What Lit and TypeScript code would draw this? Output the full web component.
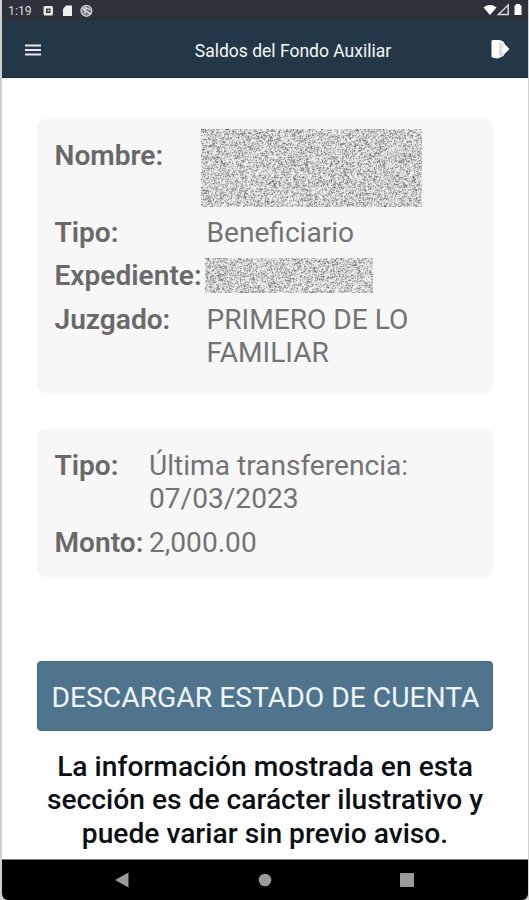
import { LitElement, html, css } from "lit";
import { customElement, property } from "lit/decorators.js";

/** A grainy block that hides private data. */
@customElement("redacted-block")
class RedactedBlock extends LitElement {
  @property({ type: Number }) seed = 3;
  @property({ type: Number }) w = 100;
  @property({ type: Number }) h = 30;
  static styles = css`
    :host { display: block; }
    canvas { display: block; }
  `;
  render() {
    return html`<canvas width=${this.w} height=${this.h}></canvas>`;
  }
  updated() {
    const ctx = this.renderRoot.querySelector("canvas")!.getContext("2d")!;
    const { w, h } = this;
    const image = ctx.createImageData(w, h);
    let state = this.seed * 7919 + 17;
    const random = () => {
      state = (state + 0x6d2b79f5) | 0;
      let t = Math.imul(state ^ (state >>> 15), 1 | state);
      t = (t + Math.imul(t ^ (t >>> 7), 61 | t)) ^ t;
      return ((t ^ (t >>> 14)) >>> 0) / 4294967296;
    };
    const grain = Array.from({ length: w * h }, () => 246 - 150 * Math.pow(random(), 2.3));
    for (let i = 0; i < w * h; i++) {
      const side = grain[i % w ? i - 1 : i];
      const up = grain[i >= w ? i - w : i];
      const v = grain[i] * 0.64 + side * 0.18 + up * 0.18;
      image.data.set([v, v, v, 255], i * 4);
    }
    ctx.putImageData(image, 0, 0);
  }
}

@customElement("app-root")
class AppRoot extends LitElement {
  static styles = css`
    :host {
      display: flex; box-sizing: border-box; width: 529px; height: 900px;
      padding: 0 1px 0 2px; background: #d0d0d0;
      font-family: Roboto, "Liberation Sans", sans-serif;
    }
    .phone {
      flex: 1; min-width: 0; display: flex; flex-direction: column;
      background: #fff; border-radius: 0 0 6px 6px; overflow: hidden;
    }
    svg { display: block; flex: none; }
    .status {
      height: 20px; flex: none; background: #2d313b; color: #d8dade; display: flex;
      align-items: center; padding: 2px 5px 0 6px; box-sizing: border-box;
    }
    .clock { font-size: 12.3px; line-height: 16px; width: 35px; }
    .spacer { flex: 1; }
    .bar {
      height: 58px; flex: none; box-sizing: border-box; background: #243746;
      border-bottom: 1px solid #152940; color: #f5f7f8;
      display: grid; grid-template-columns: 60px 1fr 40px; align-items: center;
      padding-top: 2px;
    }
    .title { font-size: 17.5px; line-height: 22px; text-align: center; white-space: nowrap; padding: 3px 0 0 36px; }
    .menu { margin: 0 0 0 22px; }
    .exit { margin-left: 2px; margin-top: -2px; }
    main { flex: 1; padding: 41px 35px 0 35px; color: #737373; font-size: 28.1px; line-height: 33.3px; }
    .card {
      background: #f7f7f7; border-radius: 7px; box-sizing: border-box;
      display: grid; row-gap: 10px; align-content: start; padding: 20.4px 17px 0 17.5px;
    }
    .person { height: 274px; grid-template-columns: 152px 1fr; }
    .transfer { height: 148px; margin-top: 36px; grid-template-columns: 94.5px 1fr; padding-top: 20px; }
    .label { font-weight: 600; color: #696969; white-space: nowrap; }
    .two { height: 66.6px; }
    .grain-name { width: 221px; height: 78px; margin: -10.4px 0 0 -5.5px; }
    .grain-file { width: 168px; height: 35px; margin: -1.3px 0 0 -1.5px; }
    .file { height: 33.3px; }
    .button {
      display: flex; align-items: center; justify-content: center; width: 100%; height: 70px;
      margin-top: 84px; padding: 3px 0 0 1px; box-sizing: border-box; border: 1px solid #406b84; border-radius: 4px;
      background: #50748c; color: #eef4fb; font: 28.25px/33px Roboto, sans-serif; white-space: nowrap;
    }
    .note { margin: 19px -10px 0; text-align: center; font-weight: 500; font-size: 28.2px; color: #0b1015; }
    .nav {
      height: 41px; flex: none; box-sizing: border-box; background: #000; border-top: 1px solid #777;
      display: flex; align-items: center;
    }
    .back { margin-left: 112px; }
    .home { margin-left: 128px; }
    .recent { margin-left: 128px; }
  `;

  render() {
    return html`<div class="phone">
      <div class="status">
        <span class="clock">1:19</span>
        <svg width="54" height="14" viewBox="0 0 54 14">
          <rect x="0.5" y="2" width="9.5" height="9.5" rx="1.5" fill="#e8e8e8" />
          <rect x="3" y="4.5" width="4.5" height="4.5" fill="#30343d" />
          <rect x="4.5" y="5.8" width="1.7" height="1.7" fill="#eee" />
          <path d="M23 1.5h6v10.5h-9V5z" fill="#efefef" />
          <circle cx="43.4" cy="6.8" r="5.4" fill="#777b82" stroke="#c9cbce" stroke-width="1.4" />
          <path d="M39.5 4.5l8.5 6M42 2.5v7.5M42 3.5l5 2" fill="none" stroke="#e5e5e5" stroke-width="1.2" />
        </svg>
        <span class="spacer"></span>
        <svg width="40" height="16" viewBox="0 0 40 16">
          <path d="M0.5 4.4Q7 -0.4 13.5 4.4L7 12z" fill="#fff" />
          <path d="M25.2 2v9.5H15.5z" fill="none" stroke="#d3d5d8" stroke-width="1.5" />
          <path d="M31.5 2.2h1.5V1h4v1.2h1.5V12h-7z" fill="#fff" />
        </svg>
      </div>
      <header class="bar">
        <svg class="menu" width="18" height="14" viewBox="0 0 18 14">
          <path d="M1 2.5h16M1 7h16M1 11.5h16" stroke="#e7e6ec" stroke-width="1.9" />
        </svg>
        <span class="title">Saldos del Fondo Auxiliar</span>
        <svg class="exit" width="20" height="22" viewBox="0 0 20 22">
          <path d="M1.5 3.2Q1.5 2.2 2.5 2h6.3q5 .4 6 4.2l4.7 4.8-4.7 4.7q-1 3-4.3 3.6L7.5 20.5 3 19.8q-1.5-.3-1.5-1.3z" fill="#fff" />
          <path d="M9 4.5l4 1 .5 3.5-1.5 1v3l1.5 1-.5 3.5-4 1.5z" fill="#dedede" />
        </svg>
      </header>
      <main>
        <section class="card person">
          <span class="label two">Nombre:</span>
          <div class="two"><redacted-block class="grain-name" .seed=${4} .w=${221} .h=${78}></redacted-block></div>
          <span class="label">Tipo:</span><span>Beneficiario</span>
          <span class="label">Expediente:</span>
          <div class="file"><redacted-block class="grain-file" .seed=${9} .w=${168} .h=${35}></redacted-block></div>
          <span class="label">Juzgado:</span><span>PRIMERO DE LO<br />FAMILIAR</span>
        </section>
        <section class="card transfer">
          <span class="label">Tipo:</span><span>Última transferencia:<br />07/03/2023</span>
          <span class="label">Monto:</span><span>2,000.00</span>
        </section>
        <button class="button">DESCARGAR ESTADO DE CUENTA</button>
        <div class="note">La información mostrada en esta<br />sección es de carácter ilustrativo y<br />puede variar sin previo aviso.</div>
      </main>
      <nav class="nav">
        <svg class="back" width="16" height="16" viewBox="0 0 16 16"><path d="M1 8L14.5 .5v15z" fill="#9b9b9b" /></svg>
        <svg class="home" width="14" height="14" viewBox="0 0 14 14"><circle cx="7" cy="7" r="6.3" fill="#9b9b9b" /></svg>
        <svg class="recent" width="14" height="14" viewBox="0 0 14 14"><rect width="14" height="14" rx="1" fill="#9b9b9b" /></svg>
      </nav>
    </div>`;
  }
}
